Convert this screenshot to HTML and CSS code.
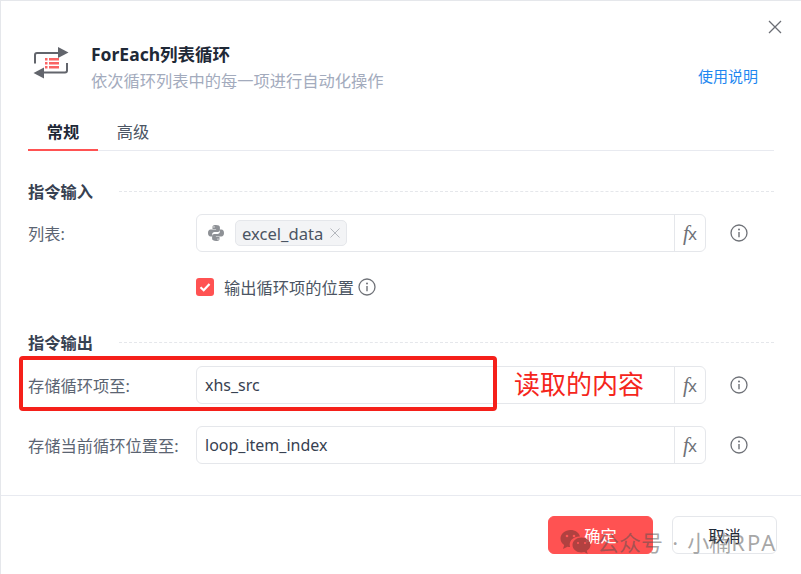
FILE: index.html
```html
<!DOCTYPE html>
<html lang="zh-CN">

<head>
    <meta charset="UTF-8">
    <title>ForEach列表循环</title>
    <link rel="stylesheet" href="styles.css">
</head>

<body>
    <div class="dialog">
        <button class="close-btn" aria-label="关闭">
            <svg width="14" height="14" viewBox="0 0 14 14"><path d="M1 1l12 12M13 1L1 13" stroke="#6b6e75" stroke-width="1.3" fill="none"/></svg>
        </button>

        <header class="head">
            <svg class="head-icon" width="38" height="34" viewBox="0 0 38 34">
                <path d="M3 17.500V9Q3 7 5 7H27" stroke="#62656c" stroke-width="2" fill="none"/>
                <path d="M26 1L36.500 6.500L26 12z" fill="#62656c"/>
                <path d="M35 17V24.500Q35 26.500 33 26.500H11" stroke="#62656c" stroke-width="2" fill="none"/>
                <path d="M12 21.500L1.500 27L12 32.500z" fill="#62656c"/>
                <path d="M13 12h2.500v2.500H13zM17 12h10v2.500H17zM13 16h2.500v2.500H13zM17 16h10v2.500H17zM13 20h2.500v2.500H13zM17 20h10v2.500H17z" fill="#fa6464"/>
            </svg>
            <div class="head-text">
                <h1>ForEach列表循环</h1>
                <p>依次循环列表中的每一项进行自动化操作</p>
            </div>
            <a class="help-link" href="#">使用说明</a>
        </header>

        <nav class="tabs">
            <a class="tab active" href="#">常规</a>
            <a class="tab" href="#">高级</a>
        </nav>

        <section class="group group-input">
            <h2 class="group-title"><span>指令输入</span></h2>
            <div class="row">
                <label>列表:</label>
                <div class="field">
                    <div class="field-value">
                        <svg class="py-icon" width="18" height="18" viewBox="0 0 18 18">
                            <path d="M8.900 1C5.500 1 5.500 2.400 5.500 3.200V5h3.600v.6H3.600C2 5.600 1 6.900 1 9s1 3.500 2.600 3.500h1.500v-2c0-1.300 1.100-2.400 2.400-2.400h3.400c1.100 0 2-.9 2-2V3.200C12.900 1.900 11.300 1 8.900 1zM7 2.200a.7.7 0 1 1 0 1.400.7.7 0 0 1 0-1.400z" fill="#8e9196"/>
                            <path d="M9.100 17c3.400 0 3.400-1.400 3.400-2.200V13H8.900v-.6h5.500c1.600 0 2.600-1.300 2.600-3.400s-1-3.500-2.600-3.500h-1.500v2c0 1.300-1.100 2.400-2.400 2.400H7.100c-1.100 0-2 .9-2 2v2.900c0 1.300 1.600 2.200 4 2.200zM11 15.800a.7.7 0 1 1 0-1.400.7.7 0 0 1 0 1.400z" fill="#8e9196"/>
                        </svg>
                        <span class="tag">excel_data<svg width="10" height="10" viewBox="0 0 10 10"><path d="M.5.500l9 9M9.500.500l-9 9" stroke="#b4b7bd" stroke-width="1" fill="none"/></svg></span>
                    </div>
                    <span class="fx"><i>f</i>x</span>
                </div>
                <svg class="info" width="18" height="18" viewBox="0 0 18 18"><circle cx="9" cy="9" r="8" stroke="#6f7278" stroke-width="1.300" fill="none"/><path d="M9 8v5.200" stroke="#6f7278" stroke-width="1.400"/><circle cx="9" cy="5.400" r="1" fill="#6f7278"/></svg>
            </div>
            <div class="check-row">
                <span class="checkbox">
                    <svg width="18" height="18" viewBox="0 0 18 18"><path d="M4.500 9.200l3.200 3.100 5.800-6.200" stroke="#fff" stroke-width="2.200" fill="none"/></svg>
                </span>
                <span class="check-label">输出循环项的位置</span>
                <svg class="info" width="18" height="18" viewBox="0 0 18 18"><circle cx="9" cy="9" r="8" stroke="#6f7278" stroke-width="1.300" fill="none"/><path d="M9 8v5.200" stroke="#6f7278" stroke-width="1.400"/><circle cx="9" cy="5.400" r="1" fill="#6f7278"/></svg>
            </div>
        </section>

        <section class="group group-output">
            <h2 class="group-title"><span>指令输出</span></h2>
            <div class="row">
                <label>存储循环项至:</label>
                <div class="field">
                    <div class="field-value">xhs_src</div>
                    <span class="fx"><i>f</i>x</span>
                </div>
                <svg class="info" width="18" height="18" viewBox="0 0 18 18"><circle cx="9" cy="9" r="8" stroke="#6f7278" stroke-width="1.300" fill="none"/><path d="M9 8v5.200" stroke="#6f7278" stroke-width="1.400"/><circle cx="9" cy="5.400" r="1" fill="#6f7278"/></svg>
            </div>
            <div class="row">
                <label>存储当前循环位置至:</label>
                <div class="field">
                    <div class="field-value">loop_item_index</div>
                    <span class="fx"><i>f</i>x</span>
                </div>
                <svg class="info" width="18" height="18" viewBox="0 0 18 18"><circle cx="9" cy="9" r="8" stroke="#6f7278" stroke-width="1.300" fill="none"/><path d="M9 8v5.200" stroke="#6f7278" stroke-width="1.400"/><circle cx="9" cy="5.400" r="1" fill="#6f7278"/></svg>
            </div>
        </section>

        <footer class="foot">
            <button class="btn btn-primary">确定</button>
            <button class="btn">取消</button>
        </footer>

        <!-- annotation drawn over the screenshot -->
        <div class="mark-box"></div>
        <div class="mark-text">读取的内容</div>

        <div class="watermark">
            <svg width="31" height="27" viewBox="0 0 31 27">
                <path d="M10.500 1C5 1 .5 4.800.5 9.500c0 2.700 1.400 5 3.700 6.600L3 20l4.400-2.300c.9.200 1.800.3 2.700.3-.3-.8-.4-1.600-.4-2.400 0-4.600 4.200-8.200 9.600-8.200h.6C19.100 3.700 15.200 1 10.500 1z" fill="#a83f3e" opacity=".9"/>
                <path d="M30.500 16c0-4.100-4-7.500-9-7.500s-9 3.400-9 7.500 4 7.500 9 7.500c1 0 1.900-.1 2.800-.4l3.400 2-.9-3.400c2.300-1.400 3.700-3.500 3.700-5.700z" fill="#a83f3e" opacity=".9"/>
                <circle cx="7" cy="7" r="1.300" fill="#f55"/>
                <circle cx="14" cy="7" r="1.300" fill="#f55"/>
                <circle cx="18" cy="14" r="1.100" fill="#f55"/>
                <circle cx="25" cy="14" r="1.100" fill="#f55"/>
            </svg>
            <span>公众号 · 小楠<span class="wm-latin">RPA</span></span>
        </div>
    </div>
</body>

</html>
```

FILE: styles.css
```css
* {
    box-sizing: border-box;
}

html, body {
    margin: 0;
    padding: 0;
    height: 100%;
}

body {
    font-family: "Noto Sans", "Noto Sans CJK SC", sans-serif;
    font-size: 16.25px;
    color: #4b5563;
    background: #e5e7eb;
    overflow: hidden;
}

.dialog {
    position: relative;
    height: 574px;
    margin-left: 1px;
    padding-top: 1px;
    background: #fff;
    border-top: 1px solid #e5e7eb;
    display: flex;
    flex-direction: column;
}

.close-btn {
    position: absolute;
    top: 19px;
    right: 19px;
    width: 14px;
    height: 14px;
    padding: 0;
    border: none;
    background: none;
    line-height: 0;
}

.head {
    display: flex;
    align-items: flex-start;
    height: 115px;
    padding: 40px 43px 0 31px;
}

.head-icon {
    margin-top: 4px;
    flex: none;
}

.head-text {
    margin-left: 21px;
    flex: 1;
}

.head-text h1 {
    margin: 0;
    font-size: 17.5px;
    line-height: 24px;
    font-weight: 700;
    color: #1f2937;
}

.head-text p {
    margin: 4px 0 0;
    font-size: 16.25px;
    line-height: 22px;
    color: #a3abbd;
}

.help-link {
    margin-top: 24px;
    font-size: 15px;
    line-height: 20px;
    color: #1e87f0;
    text-decoration: none;
}

.tabs {
    display: flex;
    height: 34px;
    margin: 0 27px;
    border-bottom: 1px solid #e8eaf0;
}

.tab {
    width: 70px;
    height: 34px;
    margin-right: 1px;
    text-align: center;
    line-height: 24px;
    padding-top: 3px;
    color: #4b5563;
    text-decoration: none;
}

.tab.active {
    margin-right: 0;
    font-weight: 700;
    color: #1f2937;
    border-bottom: 2px solid #ff5252;
}

.group {
    padding: 0 27px;
}

.group-input {
    margin-top: 30px;
}

.group-output {
    margin-top: 36px;
}

.group-title {
    display: flex;
    align-items: center;
    margin: 0 0 13px;
    height: 20px;
    font-size: 16.25px;
    font-weight: 700;
    color: #374151;
}

.group-output .group-title {
    margin-bottom: 14px;
}

.group-title::after {
    content: "";
    flex: 1;
    margin-left: 26px;
    border-top: 1px dashed #e5e7eb;
}

.row {
    display: flex;
    align-items: center;
    height: 38px;
    margin-bottom: 22px;
}

.row label {
    width: 168px;
    flex: none;
    white-space: nowrap;
    color: #5b6472;
}

.field {
    display: flex;
    width: 510px;
    height: 38px;
    flex: none;
    border: 1px solid #e5e7eb;
    border-radius: 6px;
}

.field-value {
    flex: 1;
    display: flex;
    align-items: center;
    padding-left: 8px;
    font-size: 16px;
    color: #374151;
}

.fx {
    width: 31px;
    flex: none;
    border-left: 1px solid #e5e7eb;
    text-align: center;
    font-size: 17px;
    line-height: 36px;
    color: #6f7278;
}

.fx i {
    margin-right: -1px;
    font-family: "Liberation Serif", serif;
    font-size: 21px;
}

.py-icon {
    margin: 0 10px 0 2px;
    flex: none;
}

.tag {
    display: inline-flex;
    align-items: center;
    height: 26px;
    padding: 0 6px;
    border: 1px solid #e5e7eb;
    border-radius: 5px;
    background: #f3f4f6;
    font-size: 16.6px;
    color: #4b5563;
}

.tag svg {
    margin-left: 7px;
}

.info {
    flex: none;
    margin-left: 24px;
}

.check-row {
    display: flex;
    align-items: center;
    height: 18px;
    margin: 26px 0 0 168px;
}

.checkbox {
    width: 18px;
    height: 18px;
    border-radius: 3px;
    background: #ff5252;
    line-height: 0;
}

.check-label {
    margin-left: 10px;
    color: #4b5563;
}

.check-row .info {
    margin-left: 4px;
}

.foot {
    margin-top: auto;
    height: 79px;
    padding: 20px 24px 0 0;
    display: flex;
    justify-content: flex-end;
    gap: 19px;
    border-top: 1px solid #e8eaf0;
}

.btn {
    width: 105px;
    height: 38px;
    border: 1px solid #e5e7eb;
    border-radius: 6px;
    background: #fff;
    font-family: inherit;
    font-size: 16.25px;
    color: #1f2937;
}

.btn-primary {
    border-color: #ff5252;
    background: #ff5252;
    color: #fff;
}

.mark-box {
    position: absolute;
    left: 18px;
    top: 355px;
    width: 478px;
    height: 55px;
    border: 4px solid #f5201a;
    border-radius: 4px;
}

.mark-text {
    position: absolute;
    left: 513px;
    top: 364px;
    font-size: 26px;
    line-height: 38px;
    color: #f5261c;
}

.watermark {
    position: absolute;
    left: 559px;
    top: 526px;
    display: flex;
    align-items: center;
    font-size: 22px;
    word-spacing: 3.5px;
    line-height: 30px;
    color: rgba(80, 80, 80, 0.5);
    white-space: nowrap;
}

.watermark > span {
    margin-left: 6px;
}

.wm-latin {
    letter-spacing: 2px;
}
```
